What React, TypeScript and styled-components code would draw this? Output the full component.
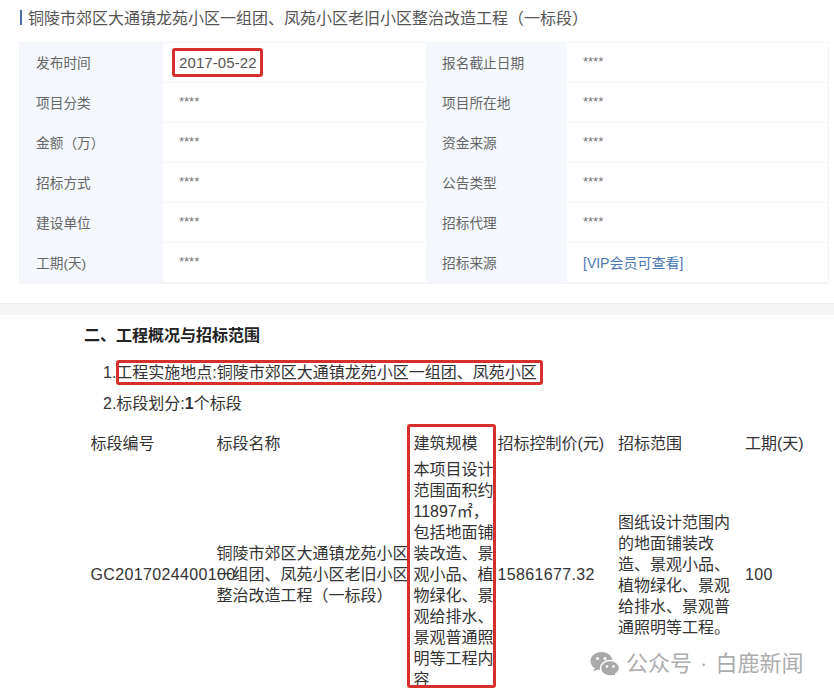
import styled, { createGlobalStyle } from 'styled-components'

const GlobalStyle = createGlobalStyle`
  html, body {
    margin: 0;
    padding: 0;
    background-color: #fff;
    font-family: "Liberation Sans", "Noto Sans CJK SC", sans-serif;
    text-spacing-trim: space-all;
  }
`

const Page = styled.div`
  position: relative;
  width: 834px;
  height: 697px;
  overflow: hidden;
`

const TopPanel = styled.section`
  height: 303px;
  box-sizing: border-box;
  padding: 7px 6px 0 20px;
`

const Title = styled.h2`
  display: flex;
  align-items: center;
  gap: 6px;
  height: 20px;
  margin: 0 0 16px;
  color: #555;
  font-size: 16px;
  font-weight: 400;
  white-space: nowrap;

  &::before {
    content: '';
    width: 2px;
    height: 15px;
    background-color: #4a6fa5;
  }
`

const InfoGrid = styled.div`
  display: grid;
  grid-template-columns: 143px 263px 141px 1fr;
  grid-auto-rows: 40px;
  box-shadow: 0 0 0 1px #f3f5f8;
`

const InfoLabel = styled.div`
  display: flex;
  align-items: center;
  padding: 0 0 2px 16px;
  color: #666;
  font-size: 13.7px;
  background-color: #f4f8fd;
  border-bottom: 1px solid #f3f5f8;
`

const InfoValue = styled.div`
  display: flex;
  align-items: center;
  padding: 0 0 0 16px;
  color: #555;
  font-size: 15px;
  letter-spacing: 0.1px;
  border-bottom: 1px solid #f3f5f8;
`

const Stars = styled.span`
  position: relative;
  top: -1px;
  color: #777;
  font-size: 13px;
  letter-spacing: 0;
`

const VipLink = styled.a`
  position: relative;
  top: -1px;
  color: #4a78b5;
  font-size: 14px;
  letter-spacing: 0;
  text-decoration: none;
`

const Marked = styled.span<{ $l: number; $r: number; $t: number; $b: number }>`
  position: relative;

  &::after {
    content: '';
    position: absolute;
    top: -${p => p.$t}px;
    right: -${p => p.$r}px;
    bottom: -${p => p.$b}px;
    left: -${p => p.$l}px;
    border: 3px solid #d5302b;
    border-radius: 3px;
  }
`

const Band = styled.div`
  height: 11px;
  background-color: #f5f5f5;
  border-top: 1px solid #eeeeee;
`

const Section = styled.section`
  padding: 11px 0 0 84px;
  color: #222;
`

const Heading = styled.h3`
  margin: 0 0 11px;
  color: #222;
  font-size: 16px;
  font-weight: 700;
  line-height: 20px;
`

const ListLine = styled.p`
  margin: 0 0 0 19px;
  color: #333;
  font-size: 16px;
  line-height: 31px;
`

const TableWrap = styled.div`
  position: relative;
  margin: 13px 0 0 6.5px;
`

const ScaleBox = styled.div`
  position: absolute;
  top: -8px;
  left: 316.5px;
  width: 83px;
  height: 258px;
  border: 3px solid #d5302b;
  border-radius: 3px;
`

const BidTable = styled.table`
  width: 743.5px;
  border-collapse: collapse;
  table-layout: fixed;
  color: #333;
  font-size: 16px;
  line-height: 21px;
`

const Col = styled.col<{ $w: number }>`
  width: ${p => p.$w}px;
`

const HeadCell = styled.th`
  height: 23px;
  padding: 0 0 4px;
  font-weight: 400;
  text-align: left;
  white-space: nowrap;
`

const Cell = styled.td<{ $nowrap?: boolean; $pad?: number }>`
  padding: 0 ${p => p.$pad ?? 0}px 0 0;
  white-space: ${p => (p.$nowrap ? 'nowrap' : 'normal')};
  letter-spacing: ${p => (p.$nowrap ? '0.35px' : '0')};
`

const Watermark = styled.div`
  position: absolute;
  top: 650px;
  left: 590px;
  display: flex;
  align-items: center;
  gap: 6px;
  color: #adadad;
  font-size: 22px;
  line-height: 28px;
  word-spacing: 2px;
  white-space: nowrap;
`

const infoRows = [
  ['项目分类', '项目所在地'],
  ['金额（万）', '资金来源'],
  ['招标方式', '公告类型'],
  ['建设单位', '招标代理'],
]

function WechatIcon() {
  return (
    <svg width="30" height="26" viewBox="0 0 30 26">
      <path d="M11.5 1C5.4 1 .5 5 .5 10c0 2.9 1.6 5.4 4.2 7.1L3.6 20.6l4-2.1c1.2.4 2.5.6 3.9.6 6 0 11-4 11-9.1S17.5 1 11.5 1z" fill="#a9a9a9" />
      <path d="M20 9.5c-5.2 0-9.5 3.5-9.5 7.8s4.3 7.8 9.5 7.8c1.1 0 2.2-.2 3.2-.5l3.4 1.4-.9-3c2.3-1.4 3.8-3.4 3.8-5.7 0-4.3-4.3-7.8-9.5-7.8z" fill="#a9a9a9" stroke="#fff" strokeWidth="1.5" />
      <circle cx="7.5" cy="7.5" r="1.5" fill="#fff" />
      <circle cx="15" cy="7.5" r="1.5" fill="#fff" />
      <circle cx="17" cy="15.5" r="1.3" fill="#fff" />
      <circle cx="23.5" cy="15.5" r="1.3" fill="#fff" />
    </svg>
  )
}

export default function App(): JSX.Element {
  return (
    <Page>
      <GlobalStyle />
      <TopPanel>
        <Title>铜陵市郊区大通镇龙苑小区一组团、凤苑小区老旧小区整治改造工程（一标段）</Title>
        <InfoGrid>
          <InfoLabel>发布时间</InfoLabel>
          <InfoValue>
            <Marked $l={7} $r={6} $t={6} $b={6}>2017-05-22</Marked>
          </InfoValue>
          <InfoLabel>报名截止日期</InfoLabel>
          <InfoValue><Stars>****</Stars></InfoValue>
          {infoRows.map(([left, right]) => (
            <>
              <InfoLabel>{left}</InfoLabel>
              <InfoValue><Stars>****</Stars></InfoValue>
              <InfoLabel>{right}</InfoLabel>
              <InfoValue><Stars>****</Stars></InfoValue>
            </>
          ))}
          <InfoLabel>工期(天)</InfoLabel>
          <InfoValue><Stars>****</Stars></InfoValue>
          <InfoLabel>招标来源</InfoLabel>
          <InfoValue><VipLink href="#">[VIP会员可查看]</VipLink></InfoValue>
        </InfoGrid>
      </TopPanel>
      <Band />
      <Section>
        <Heading>二、工程概况与招标范围</Heading>
        <ListLine>
          1.<Marked $l={0} $r={6} $t={4} $b={4}>工程实施地点:铜陵市郊区大通镇龙苑小区一组团、凤苑小区</Marked>
        </ListLine>
        <ListLine>
          2.标段划分:<strong>1</strong>个标段
        </ListLine>
        <TableWrap>
          <BidTable>
            <colgroup>
              <Col $w={126} />
              <Col $w={197} />
              <Col $w={84} />
              <Col $w={120.5} />
              <Col $w={127} />
              <Col $w={89} />
            </colgroup>
            <thead>
              <tr>
                <HeadCell>标段编号</HeadCell>
                <HeadCell>标段名称</HeadCell>
                <HeadCell>建筑规模</HeadCell>
                <HeadCell>招标控制价(元)</HeadCell>
                <HeadCell>招标范围</HeadCell>
                <HeadCell>工期(天)</HeadCell>
              </tr>
            </thead>
            <tbody>
              <tr>
                <Cell $nowrap>GC2017024400100</Cell>
                <Cell $pad={4}>铜陵市郊区大通镇龙苑小区一组团、凤苑小区老旧小区整治改造工程（一标段）</Cell>
                <Cell>本项目设计范围面积约11897㎡，包括地面铺装改造、景观小品、植物绿化、景观给排水、景观普通照明等工程内容</Cell>
                <Cell $nowrap>15861677.32</Cell>
                <Cell $pad={12}>图纸设计范围内的地面铺装改造、景观小品、植物绿化、景观给排水、景观普通照明等工程。</Cell>
                <Cell $nowrap>100</Cell>
              </tr>
            </tbody>
          </BidTable>
          <ScaleBox />
        </TableWrap>
      </Section>
      <Watermark>
        <WechatIcon />
        公众号 · 白鹿新闻
      </Watermark>
    </Page>
  )
}
